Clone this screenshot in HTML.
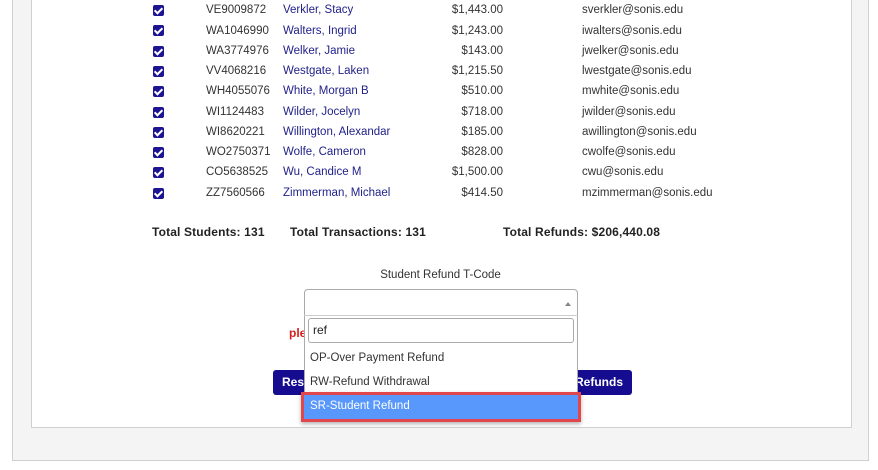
<!DOCTYPE html>
<html><head><style>
body{margin:0;width:878px;height:470px;background:#fff;font-family:"Liberation Sans",Arial,sans-serif;position:relative;overflow:hidden}
.outer{position:absolute;left:12px;top:-2px;width:857px;height:463px;background:#f4f4f4;border:1px solid #d0d0d0;box-sizing:border-box}
.inner{position:absolute;left:31px;top:-2px;width:821px;height:430px;background:#fff;border:1px solid #d0d0d0;box-sizing:border-box}
.r{position:absolute;font-size:11.5px;color:#333;height:14px;line-height:14px}
.cb{position:absolute;left:153px;width:11px;height:11px;background:#1d1491;border-radius:2px}
.cb:after{content:"";position:absolute;left:3px;top:1px;width:3px;height:6px;border:solid #fff;border-width:0 2px 2px 0;transform:rotate(45deg)}
.n{color:#22228a}
.amt{text-align:right;width:80px;left:423px}
.tot{position:absolute;top:225px;font-size:12px;font-weight:bold;color:#222;letter-spacing:0.15px}
.btn{position:absolute;top:370px;height:25px;background:#150c8f;color:#fff;font-size:12px;font-weight:bold;line-height:25px;border-radius:3px}
</style></head><body>
<div class="outer"></div>
<div class="inner"></div>

<div class="cb" style="top:5px"></div><div class="r" style="left:206px;top:3px">VE9009872</div><div class="r n" style="left:283px;top:3px">Verkler, Stacy</div><div class="r amt" style="top:3px">$1,443.00</div><div class="r" style="left:582px;top:3px">sverkler@sonis.edu</div>
<div class="cb" style="top:25px"></div><div class="r" style="left:206px;top:24px">WA1046990</div><div class="r n" style="left:283px;top:24px">Walters, Ingrid</div><div class="r amt" style="top:24px">$1,243.00</div><div class="r" style="left:582px;top:24px">iwalters@sonis.edu</div>
<div class="cb" style="top:46px"></div><div class="r" style="left:206px;top:44px">WA3774976</div><div class="r n" style="left:283px;top:44px">Welker, Jamie</div><div class="r amt" style="top:44px">$143.00</div><div class="r" style="left:582px;top:44px">jwelker@sonis.edu</div>
<div class="cb" style="top:66px"></div><div class="r" style="left:206px;top:64px">VV4068216</div><div class="r n" style="left:283px;top:64px">Westgate, Laken</div><div class="r amt" style="top:64px">$1,215.50</div><div class="r" style="left:582px;top:64px">lwestgate@sonis.edu</div>
<div class="cb" style="top:86px"></div><div class="r" style="left:206px;top:84px">WH4055076</div><div class="r n" style="left:283px;top:84px">White, Morgan B</div><div class="r amt" style="top:84px">$510.00</div><div class="r" style="left:582px;top:84px">mwhite@sonis.edu</div>
<div class="cb" style="top:107px"></div><div class="r" style="left:206px;top:105px">WI1124483</div><div class="r n" style="left:283px;top:105px">Wilder, Jocelyn</div><div class="r amt" style="top:105px">$718.00</div><div class="r" style="left:582px;top:105px">jwilder@sonis.edu</div>
<div class="cb" style="top:127px"></div><div class="r" style="left:206px;top:125px">WI8620221</div><div class="r n" style="left:283px;top:125px">Willington, Alexandar</div><div class="r amt" style="top:125px">$185.00</div><div class="r" style="left:582px;top:125px">awillington@sonis.edu</div>
<div class="cb" style="top:147px"></div><div class="r" style="left:206px;top:145px">WO2750371</div><div class="r n" style="left:283px;top:145px">Wolfe, Cameron</div><div class="r amt" style="top:145px">$828.00</div><div class="r" style="left:582px;top:145px">cwolfe@sonis.edu</div>
<div class="cb" style="top:167px"></div><div class="r" style="left:206px;top:165px">CO5638525</div><div class="r n" style="left:283px;top:165px">Wu, Candice M</div><div class="r amt" style="top:165px">$1,500.00</div><div class="r" style="left:582px;top:165px">cwu@sonis.edu</div>
<div class="cb" style="top:188px"></div><div class="r" style="left:206px;top:186px">ZZ7560566</div><div class="r n" style="left:283px;top:186px">Zimmerman, Michael</div><div class="r amt" style="top:186px">$414.50</div><div class="r" style="left:582px;top:186px">mzimmerman@sonis.edu</div>

<div class="tot" style="left:152px">Total Students: 131</div>
<div class="tot" style="left:290px">Total Transactions: 131</div>
<div class="tot" style="left:503px">Total Refunds: $206,440.08</div>

<div class="r" style="left:304px;width:273px;text-align:center;top:268px;color:#333">Student Refund T-Code</div>
<div style="position:absolute;left:289px;top:326px;font-size:12px;font-weight:bold;color:#d42020">ple</div>
<div class="btn" style="left:273px;width:40px;padding-left:9px;box-sizing:border-box">Rese</div>
<div class="btn" style="left:560px;width:72px;text-align:right;padding-right:9px;box-sizing:border-box">t Refunds</div>

<div style="position:absolute;left:304px;top:289px;width:274px;height:132px;background:#fff;border:1px solid #aaa;border-radius:4px 4px 0 0;box-sizing:border-box"></div>
<div style="position:absolute;left:304px;top:315px;width:274px;height:1px;background:#ccc"></div>
<div style="position:absolute;left:565px;top:302px;width:0;height:0;border-left:3px solid transparent;border-right:3px solid transparent;border-bottom:4px solid #888"></div>
<div style="position:absolute;left:308px;top:318px;width:266px;height:25px;border:1px solid #aaa;border-radius:3px;box-sizing:border-box;font-size:12px;line-height:23px;padding-left:4px;color:#222">ref</div>
<div class="r" style="left:310px;top:351px">OP-Over Payment Refund</div>
<div class="r" style="left:310px;top:375px">RW-Refund Withdrawal</div>
<div style="position:absolute;left:301px;top:392px;width:280px;height:30px;border:3px solid #e0464b;box-sizing:border-box;background:#5897fb;box-shadow:0 2px 4px rgba(0,0,0,.3)"></div>
<div class="r" style="left:310px;top:399px;color:#fff">SR-Student Refund</div>
</body></html>
